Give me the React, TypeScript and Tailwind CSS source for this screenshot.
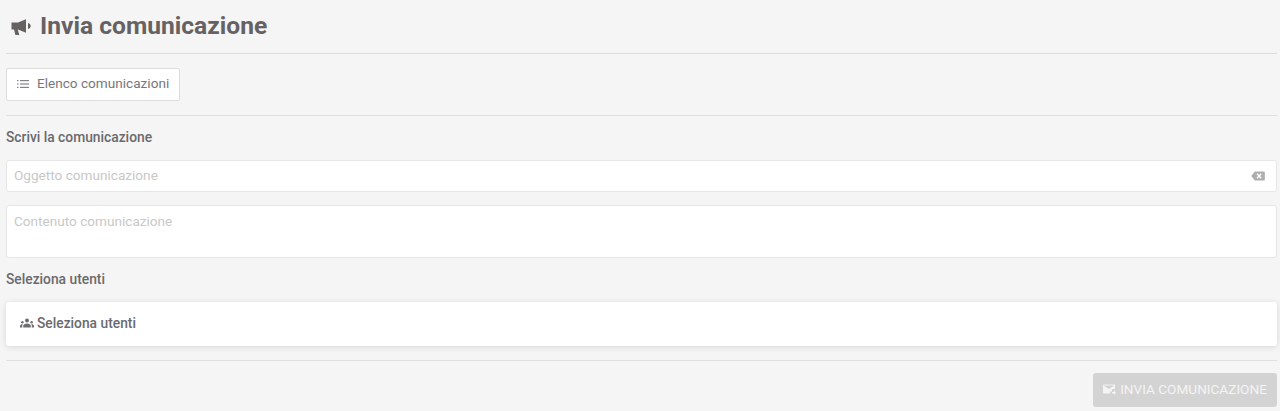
import React from "react";

const Megaphone = () => (
  <svg width="20" height="16" viewBox="0 0 20 16" className="shrink-0">
    <path d="M0.5 3.5 H7 L15 0.2 V13.8 L7 10.5 H6.8 L8.3 16 H4.4 L3 10.5 H0.5 Z" fill="#666262" />
    <path d="M17 4 C20.6 5 20.6 9 17 10 Z" fill="#666262" />
  </svg>
);

const ListIcon = () => (
  <svg width="12" height="10" viewBox="0 0 12 10" className="shrink-0" fill="#858589">
    <rect x="0" y="1" width="1.5" height="1.2" />
    <rect x="0" y="4.4" width="1.5" height="1.2" />
    <rect x="0" y="7.8" width="1.5" height="1.2" />
    <rect x="3" y="1" width="9" height="1.2" />
    <rect x="3" y="4.4" width="9" height="1.2" />
    <rect x="3" y="7.8" width="9" height="1.2" />
  </svg>
);

const Backspace = () => (
  <svg width="14" height="10" viewBox="0 0 15 11" className="shrink-0">
    <path d="M4 0.5 H14 A1 1 0 0 1 15 1.5 V9.5 A1 1 0 0 1 14 10.5 H4 L0 5.5 Z" fill="#aeaeae" />
    <path d="M6.5 3 L11 8 M11 3 L6.5 8" stroke="#ffffff" strokeWidth="1.5" />
  </svg>
);

const Groups = () => (
  <svg width="14" height="10" viewBox="0 0 14 10" className="shrink-0" fill="#6e6e72">
    <circle cx="7" cy="2.6" r="2" />
    <circle cx="2.4" cy="4.2" r="1.2" />
    <circle cx="11.6" cy="4.2" r="1.2" />
    <path d="M3.2 9.5 V8 C3.2 6.4 5 5.5 7 5.5 C9 5.5 10.8 6.4 10.8 8 V9.5 Z" />
    <path d="M0 9.5 V8.3 C0 7 1 6 2.6 6 C2.2 6.9 2.2 8 2.2 9.5 Z" />
    <path d="M14 9.5 V8.3 C14 7 13 6 11.4 6 C11.8 6.9 11.8 8 11.8 9.5 Z" />
  </svg>
);

const SendMail = () => (
  <svg width="13" height="11" viewBox="0 0 13 11" className="shrink-0" fill="#f4f4f4">
    <path d="M0 0.5 H12 V5 H9 V7.5 H7 V9.5 H0 Z M0.8 1.6 L6 5 L11.2 1.6 Z" fillRule="evenodd" />
    <path d="M9 8 H11 V6 L13 8.7 L11 11 V9.5 H9 Z" />
  </svg>
);

export default function App() {
  return (
    <div
      className="h-[411px] overflow-hidden bg-[#f5f5f5] pl-[6px] pr-[3px] text-[#666666]"
      style={{ fontFamily: "Roboto, sans-serif" }}
    >
      <div className="flex h-[54px] items-center gap-[9px] pl-[5px] border-b border-[#dcdcdc]">
        <Megaphone />
        <h1 className="text-[24.6px] font-bold leading-none text-[#666262]">Invia comunicazione</h1>
      </div>

      <div className="flex h-[62px] items-center border-b border-[#e0e0e0]">
        <button className="flex h-[33px] w-[174px] items-center gap-[8px] rounded-[2px] border border-[#dddddd] bg-white pb-[2px] pl-[10px] text-[13.6px] text-[#77777b]">
          <ListIcon />
          Elenco comunicazioni
        </button>
      </div>

      <div className="flex h-[44px] items-center pb-[2px] text-[13.8px] font-medium text-[#6a6a6e]">
        Scrivi la comunicazione
      </div>

      <div className="flex h-[32px] items-center justify-between rounded-[3px] border border-[#e6e6e6] bg-white pl-[7px] pr-[11px] text-[13.6px] text-[#c8c8c8]">
        <span className="pb-[2px]">Oggetto comunicazione</span>
        <Backspace />
      </div>

      <div className="mt-[13px] h-[53px] rounded-[3px] border border-[#e6e6e6] bg-white pl-[7px] pt-[6px] text-[13.6px] leading-[18px] text-[#c8c8c8]">
        Contenuto comunicazione
      </div>

      <div className="flex h-[44px] items-center pb-[2px] text-[13.8px] font-medium text-[#6a6a6e]">Seleziona utenti</div>

      <div className="flex h-[44px] items-center gap-[3px] rounded-[3px] bg-white pb-[2px] pl-[14px] text-[13.8px] font-medium text-[#6a6a6e] shadow-[0_1px_6px_rgba(0,0,0,0.12)]">
        <Groups />
        Seleziona utenti
      </div>

      <div className="mt-[14px] border-t border-[#e0e0e0]" />

      <div className="mt-[12px] flex justify-end">
        <button className="flex h-[34px] w-[184px] items-center justify-center gap-[4px] rounded-[3px] bg-[#d3d3d3] pb-[2px] text-[13.6px] text-[#f4f4f4]">
          <SendMail />
          INVIA COMUNICAZIONE
        </button>
      </div>
    </div>
  );
}
